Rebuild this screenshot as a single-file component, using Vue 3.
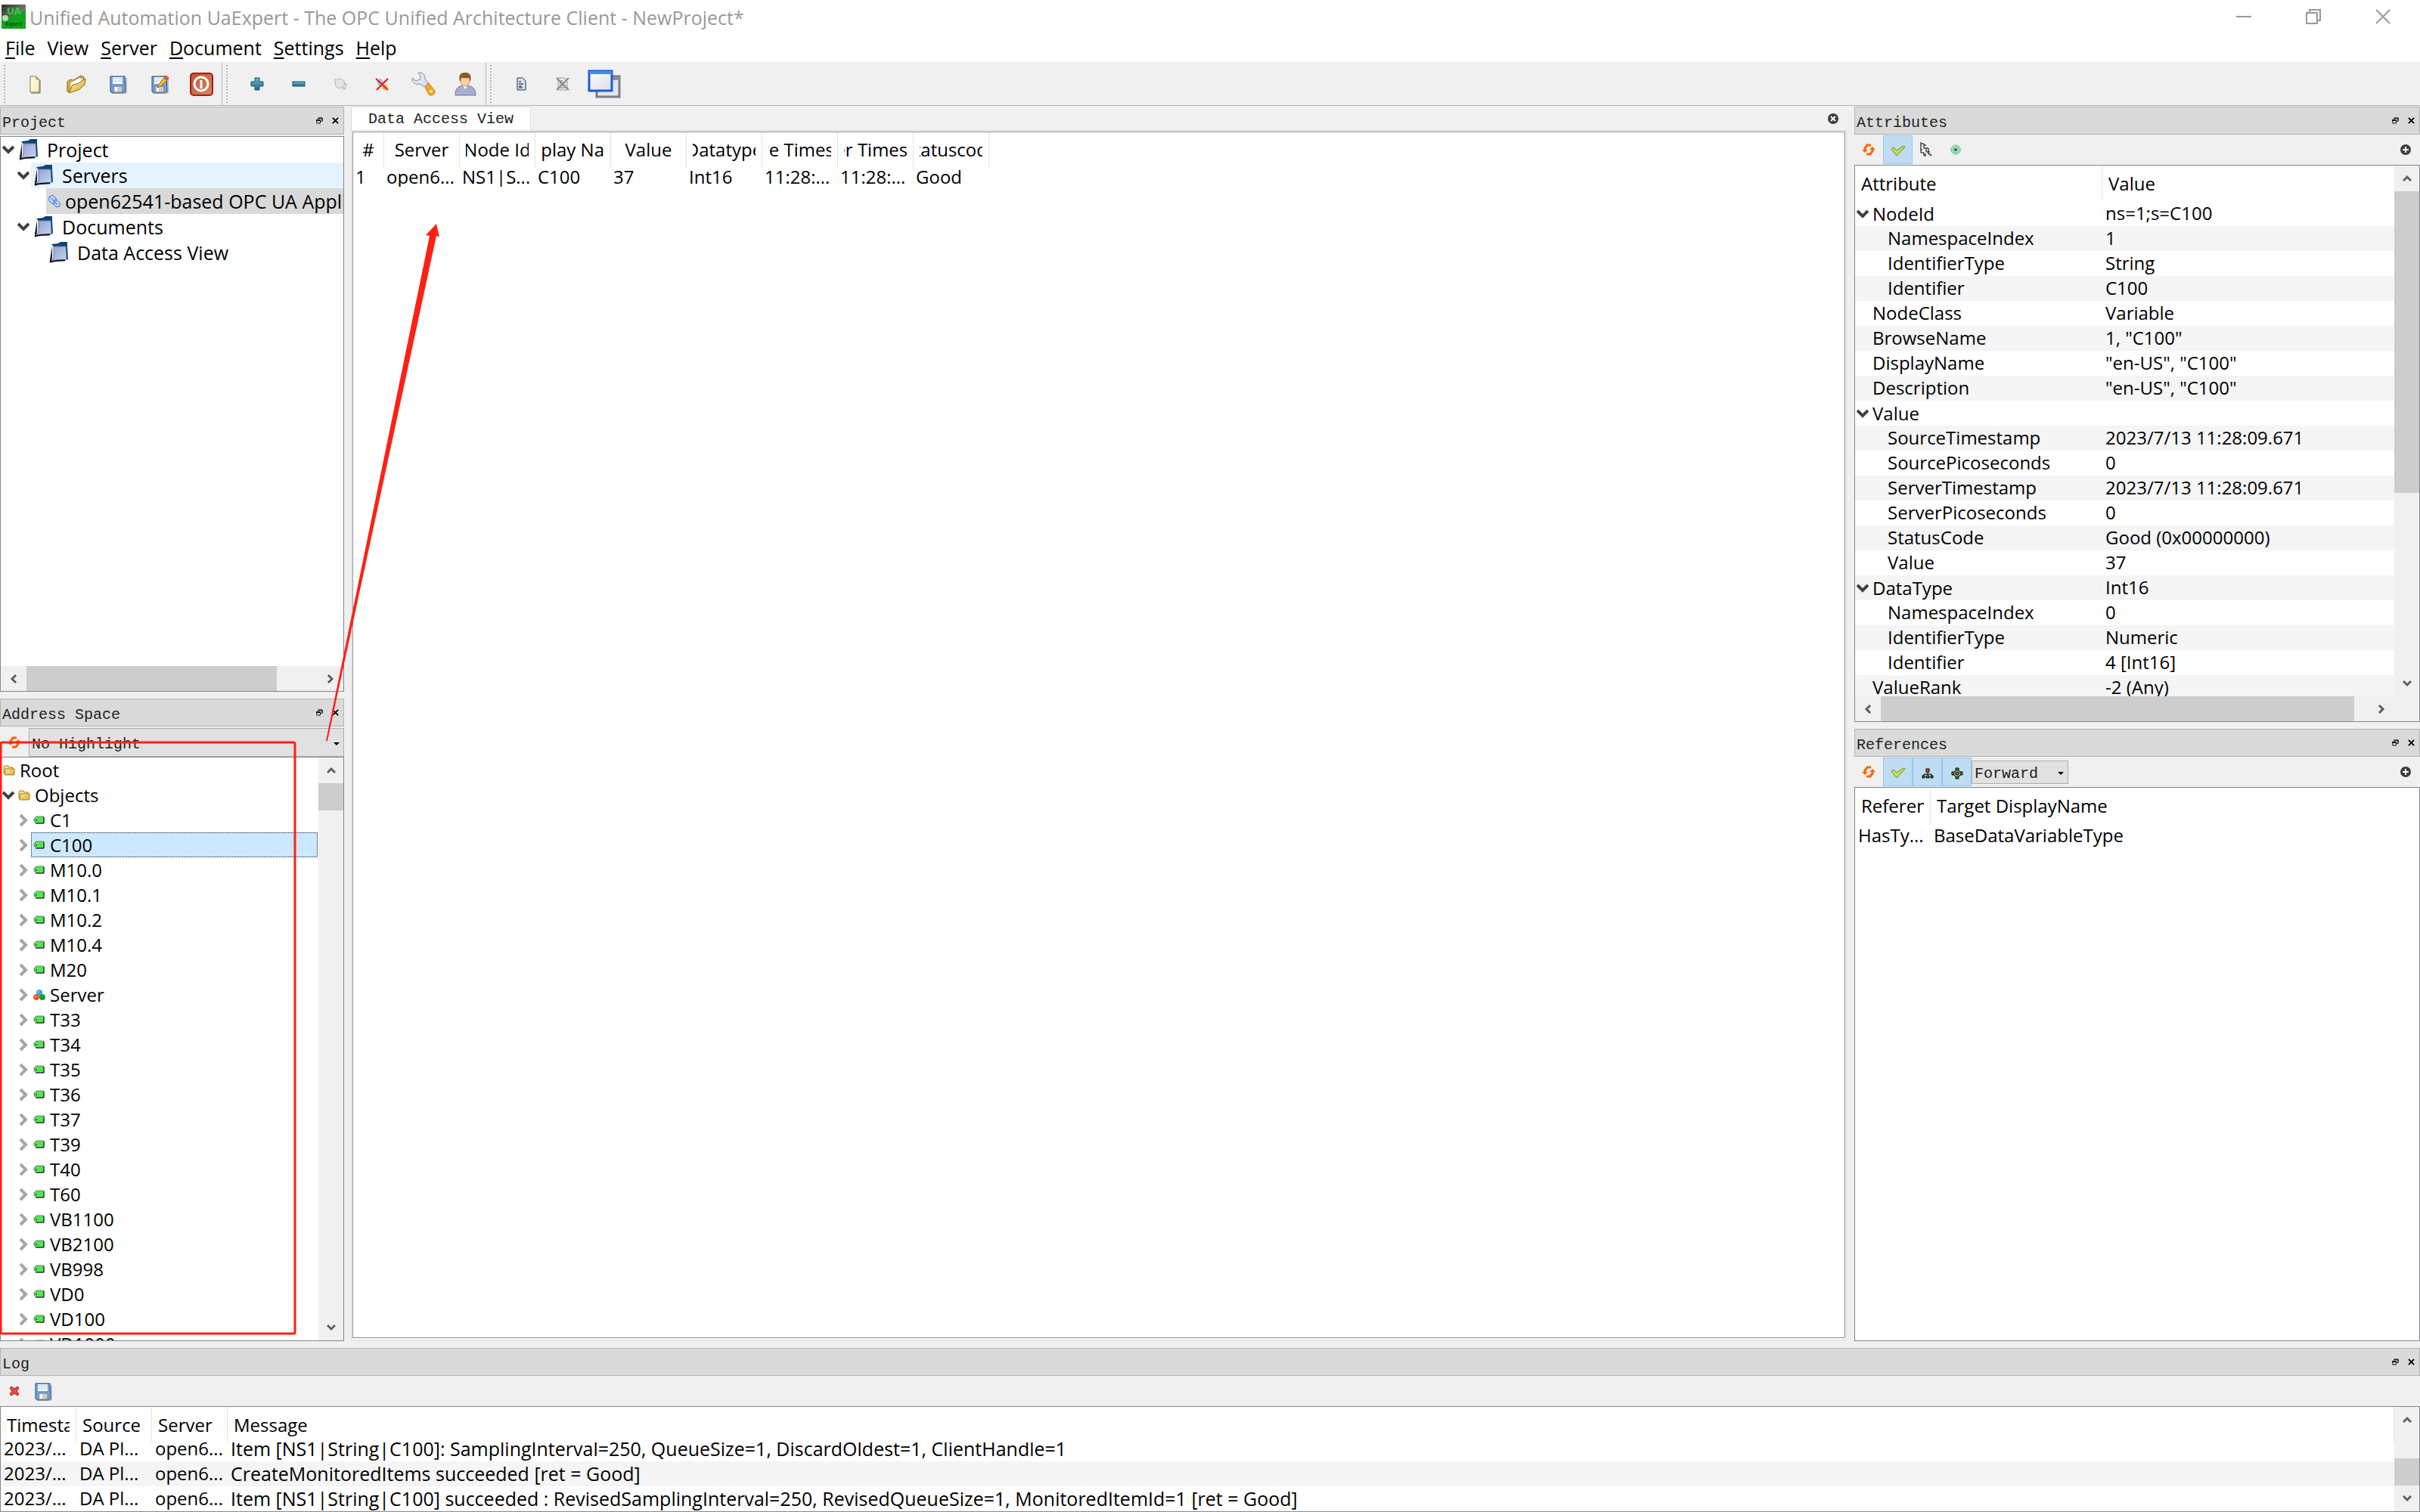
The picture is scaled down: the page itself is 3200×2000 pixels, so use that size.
<script setup>
import { ref } from 'vue'

const menus = [
  { key: 'F', rest: 'ile' },
  { key: '', rest: 'View' },
  { key: 'S', rest: 'erver' },
  { key: 'D', rest: 'ocument' },
  { key: 'S', rest: 'ettings' },
  { key: 'H', rest: 'elp' }
]

const toolGroups = [
  ['New', 'Open', 'Save', 'SaveAs', 'Power'],
  ['Plus', 'Minus', 'Plug', 'Unplug', 'Wrench', 'User'],
  ['Doc', 'DocOff', 'Windows']
]

const projectTree = [
  { label: 'Project', level: 0, open: true, icon: 'Book' },
  { label: 'Servers', level: 1, open: true, icon: 'Book', state: 'hover' },
  { label: 'open62541-based OPC UA Application', level: 2, icon: 'Link', state: 'muted' },
  { label: 'Documents', level: 1, open: true, icon: 'Book' },
  { label: 'Data Access View', level: 2, icon: 'Book' }
]

const objects = [
  'C1', 'C100', 'M10.0', 'M10.1', 'M10.2', 'M10.4', 'M20', 'Server', 'T33', 'T34', 'T35', 'T36',
  'T37', 'T39', 'T40', 'T60', 'VB1100', 'VB2100', 'VB998', 'VD0', 'VD100', 'VD1000'
]

const dataHeads = ['#', 'Server', 'Node Id', 'Display Name', 'Value', 'Datatype', 'Source Timestamp', 'Server Timestamp', 'Statuscode']
const dataRow = ['1', 'open6...', 'NS1|S...', 'C100', '37', 'Int16', '11:28:...', '11:28:...', 'Good']

const attributes = [
  ['NodeId', 'ns=1;s=C100', 'open'],
  ['NamespaceIndex', '1', 'child'],
  ['IdentifierType', 'String', 'child'],
  ['Identifier', 'C100', 'child'],
  ['NodeClass', 'Variable', ''],
  ['BrowseName', '1, "C100"', ''],
  ['DisplayName', '"en-US", "C100"', ''],
  ['Description', '"en-US", "C100"', ''],
  ['Value', '', 'open'],
  ['SourceTimestamp', '2023/7/13 11:28:09.671', 'child'],
  ['SourcePicoseconds', '0', 'child'],
  ['ServerTimestamp', '2023/7/13 11:28:09.671', 'child'],
  ['ServerPicoseconds', '0', 'child'],
  ['StatusCode', 'Good (0x00000000)', 'child'],
  ['Value', '37', 'child'],
  ['DataType', 'Int16', 'open'],
  ['NamespaceIndex', '0', 'child'],
  ['IdentifierType', 'Numeric', 'child'],
  ['Identifier', '4 [Int16]', 'child'],
  ['ValueRank', '-2 (Any)', '']
]

const logRows = [
  'Item [NS1|String|C100]: SamplingInterval=250, QueueSize=1, DiscardOldest=1, ClientHandle=1',
  'CreateMonitoredItems succeeded [ret = Good]',
  'Item [NS1|String|C100] succeeded : RevisedSamplingInterval=250, RevisedQueueSize=1, MonitoredItemId=1 [ret = Good]'
]

const selected = ref('C100')
const highlight = ref('No Highlight')
const direction = ref('Forward')
</script>

<template>
  <div class="app">
    <svg class="defs" aria-hidden="true">
      <defs>
        <linearGradient id="gGold" x1="0" y1="0" x2="1" y2="1">
          <stop offset="0" stop-color="#fff0a8" /><stop offset="1" stop-color="#dba92c" />
        </linearGradient>
        <linearGradient id="gPage" x1="0" y1="0" x2="1" y2="1">
          <stop offset="0" stop-color="#fffef2" /><stop offset="1" stop-color="#f8ecae" />
        </linearGradient>
        <linearGradient id="gBook" x1="0" y1="0" x2="1" y2="1">
          <stop offset="0" stop-color="#8f9fcb" /><stop offset="1" stop-color="#c9d6f6" />
        </linearGradient>
        <linearGradient id="gTeal" x1="0" y1="0" x2="0" y2="1">
          <stop offset="0" stop-color="#6fb4cc" /><stop offset="1" stop-color="#1b6a88" />
        </linearGradient>
        <linearGradient id="gWin" x1="0" y1="0" x2="1" y2="1">
          <stop offset="0" stop-color="#ffffff" /><stop offset="1" stop-color="#dcdde8" />
        </linearGradient>
        <linearGradient id="gPower" x1="0" y1="0" x2="1" y2="1">
          <stop offset="0" stop-color="#bf5532" /><stop offset="1" stop-color="#d28a66" />
        </linearGradient>
        <linearGradient id="gApp" x1="0" y1="0" x2="1" y2="1">
          <stop offset="0" stop-color="#333" /><stop offset="0.6" stop-color="#777" /><stop offset="1" stop-color="#444" />
        </linearGradient>
        <pattern id="dither" width="2" height="2" patternUnits="userSpaceOnUse">
          <rect width="2" height="2" fill="#21f421" /><path d="M0 0h1v1H0zM1 1h1v1H1z" fill="#7edc7e" />
        </pattern>
      </defs>
      <symbol id="New" viewBox="0 0 32 32">
        <path d="M10 6h8l4 4v17H10z" fill="url(#gPage)" stroke="#8a7a4a" /><path d="M18 6v4h4" fill="#d9d2b0" stroke="#8a7a4a" />
        <path d="M23 11v17H11" fill="none" stroke="#666" />
      </symbol>
      <symbol id="Open" viewBox="0 0 32 32">
        <path d="M4 26V13l4-3 4 1 10-6 4 2-2 8-17 12z" fill="#d7a93a" stroke="#8b6a1e" />
        <path d="M8 22V14l12-6 5 1-3 6z" fill="#fff" stroke="#b9a878" />
        <path d="M6 28l5-11 6-1 11-7-1 8-8 7z" fill="url(#gGold)" stroke="#8b6a1e" />
      </symbol>
      <symbol id="Save" viewBox="0 0 32 32">
        <path d="M6 6h19l1 20-3 2H8l-2-2z" fill="#6ea3de" stroke="#2f4a78" /><path d="M9 7h13v9H9z" fill="#f2f5f8" />
        <path d="M9 9h13M9 12h13" stroke="#c6ced8" /><path d="M10 19h12v8H10z" fill="#c9cdd2" stroke="#6f7a88" />
        <path d="M12 20h3v6h-3z" fill="#fff" /><path d="M27 8v20H9" fill="none" stroke="#888" />
      </symbol>
      <symbol id="SaveAs" viewBox="0 0 32 32">
        <use href="#Save" /><path d="M14 18l8-10 4 3-8 8-5 2z" fill="#f6bb2c" stroke="#96631a" /><path d="M22 7l2-2 4 3-2 3z" fill="#e8665c" stroke="#b23a30" />
      </symbol>
      <symbol id="Power" viewBox="0 0 32 32">
        <rect x="2" y="2" width="29" height="29" rx="4" fill="url(#gPower)" stroke="#a51f10" stroke-width="2" />
        <circle cx="16" cy="16" r="9" fill="none" stroke="#fff" stroke-width="3" /><path d="M16 11v11" stroke="#fff" stroke-width="3" />
      </symbol>
      <symbol id="Plus" viewBox="0 0 32 32"><path d="M13 8h6v5h5v6h-5v5h-6v-5H8v-6h5z" fill="url(#gTeal)" stroke="#1a556d" /></symbol>
      <symbol id="Minus" viewBox="0 0 32 32"><rect x="8" y="13" width="16" height="6" fill="url(#gTeal)" stroke="#1a556d" /></symbol>
      <symbol id="Plug" viewBox="0 0 32 32">
        <path d="M9 9l2 2 5-2 5 3 1 5-3 3-5 2-4-3-1-6zM19 20l4 3M20 15l4 1v3l-3 4h-3" fill="#e6e6e6" stroke="#b4b4b4" />
      </symbol>
      <symbol id="Unplug" viewBox="0 0 32 32">
        <path d="M10 10l5-1 4 5-5 6-4-4z" fill="#a9c0ef" /><path d="M17 17l4-1 3 5-4 4-4-3z" fill="#f4b54a" />
        <path d="M8 9l16 15M24 9L9 24" stroke="#f01818" stroke-width="2" />
      </symbol>
      <symbol id="Wrench" viewBox="0 0 32 32">
        <path d="M17 18l5-4 9 11c1 4-4 8-8 5z" fill="#f6a623" stroke="#c97a10" />
        <path d="M9 1c6-1 10 4 9 9l4 5-5 5-6-4C6 18 0 14 1 8l5 4 5-2 1-4z" fill="#dfe2ef" stroke="#8a8fa6" />
        <circle cx="26" cy="26" r="2" fill="#fff0c8" />
      </symbol>
      <symbol id="User" viewBox="0 0 32 32">
        <path d="M3 31c0-9 4-13 13-13s14 4 14 13z" fill="#a9aed0" stroke="#6f7499" />
        <path d="M12 17h8l-4 6z" fill="#fff" /><ellipse cx="16" cy="11" rx="6" ry="8" fill="#fbd09d" stroke="#c58a4e" />
        <path d="M9 13C7 4 10 1 16 1s9 3 7 12l-2-5c-5 1-8 0-10 0z" fill="#8b5a23" />
      </symbol>
      <symbol id="Doc" viewBox="0 0 32 32">
        <path d="M11 8h7l4 4v12H11z" fill="#cfe3fb" stroke="#333" /><path d="M13 13h3M13 16h6M13 19h4M13 21h5" stroke="#111" />
      </symbol>
      <symbol id="DocOff" viewBox="0 0 32 32">
        <path d="M10 8h8l4 4v12H10z" fill="#e9e9e9" stroke="#999" /><path d="M12 12h4M12 15h7M12 18h7M12 21h7" stroke="#777" />
        <path d="M8 8l16 16M24 8L8 24" stroke="#8a8a8a" stroke-width="2" />
      </symbol>
      <symbol id="Windows" viewBox="0 0 44 38">
        <rect x="12" y="9" width="30" height="27" fill="#e4e4ec" stroke="#7b7b8c" stroke-width="3" /><path d="M12 10h30v4H12z" fill="#8d8d9c" />
        <rect x="2" y="2" width="30" height="26" fill="url(#gWin)" stroke="#1a5fd0" stroke-width="3" /><path d="M2 2h30v4H2z" fill="#3d8df5" />
      </symbol>
      <symbol id="Book" viewBox="0 0 28 30">
        <path d="M4 4l9-1 3-2h9v5l1 18-4 1z" fill="#0f4372" /><path d="M2 28c3-1 3-5 3-11V6L2 24z" fill="#222" />
        <path d="M7 7h16l1 16c-1 3-3 3-5 3l-15 1c3-3 3-7 3-11z" fill="url(#gBook)" stroke="#6a7aa2" />
        <path d="M2 28c4-3 16-2 20-3" fill="none" stroke="#111" stroke-width="2" />
      </symbol>
      <symbol id="Link" viewBox="0 0 16 18">
        <path d="M1 3l4-2 5 4v6l-4 2-5-4zM7 8l4-1 4 4v5l-4 1-5-4z" fill="#bcd4f7" stroke="#4d7fd0" /><path d="M3 4l9 10" stroke="#4d7fd0" />
      </symbol>
      <symbol id="Folder" viewBox="0 0 16 14">
        <path d="M1 11V3l1-2h5l1 2h5v8z" fill="#f7e29a" stroke="#a67c1e" /><path d="M3 5h12v7l-1 1H2z" fill="url(#gGold)" stroke="#a67c1e" />
      </symbol>
      <symbol id="Tag" viewBox="0 0 16 12">
        <path d="M4 1h10v9H4L1 7V4z" fill="url(#dither)" stroke="#777" /><path d="M3 10h11V2" fill="none" stroke="#111" />
        <path d="M3 5h2v2H3z" fill="#555" />
      </symbol>
      <symbol id="Balls" viewBox="0 0 16 16">
        <circle cx="8" cy="5" r="4" fill="#35a7e8" /><circle cx="4" cy="11" r="4" fill="#ee5a24" /><circle cx="12" cy="11" r="4" fill="#17a02f" />
        <circle cx="7" cy="4" r="1" fill="#b9e4fb" /><circle cx="3" cy="10" r="1" fill="#fbb79d" />
      </symbol>
      <symbol id="Refresh" viewBox="0 0 18 16">
        <path d="M12 2H7L4 6v3M6 14h5l3-4V7" fill="none" stroke="#ff6200" stroke-width="3" />
        <path d="M0 8h8l-4 4zM18 8h-8l4-4z" fill="#ff6200" />
      </symbol>
      <symbol id="Check" viewBox="0 0 20 16"><path d="M1 5l3-2 4 4 9-6 2 1-11 12z" fill="#bfe04f" stroke="#6a8f2a" /></symbol>
      <symbol id="Steps" viewBox="0 0 18 20">
        <path d="M1 0v14h4M1 2h4v2h3M5 4v4h6v2M8 8v5h5M1 10h2M5 14v4h3M11 10v6h3v2h1M5 16h3" fill="none" stroke="#000" stroke-width="1" />
      </symbol>
      <symbol id="Target" viewBox="0 0 16 16">
        <circle cx="8" cy="8" r="6" fill="#f1fbf5" stroke="#3aa869" /><circle cx="8" cy="8" r="4" fill="#c9eed8" stroke="#3aa869" /><circle cx="8" cy="8" r="2" fill="#0d6a34" />
      </symbol>
      <symbol id="Hier" viewBox="0 0 16 16">
        <path d="M8 6v4M3 11v-2h10v2" fill="none" stroke="#000" />
        <rect x="6" y="2" width="4" height="4" fill="#e8521a" stroke="#000" />
        <path d="M1 11h3v3H1zM6 11h4v3H6zM12 11h3v3h-3z" fill="#1ea02c" stroke="#000" />
      </symbol>
      <symbol id="Net" viewBox="0 0 16 16">
        <path d="M8 2l6 6-6 6-6-6z" fill="#fff" stroke="#000" />
        <path d="M6 1h4v3H6zM6 12h4v3H6zM1 6h3v4H1zM12 6h3v4h-3z" fill="#1ea02c" stroke="#000" />
        <rect x="6" y="6" width="4" height="4" fill="#e8521a" stroke="#000" />
      </symbol>
      <symbol id="Add" viewBox="0 0 16 16"><circle cx="8" cy="8" r="7" fill="#3c3c3c" /><path d="M8 4v8M4 8h8" stroke="#fff" stroke-width="2" /></symbol>
      <symbol id="Shut" viewBox="0 0 16 16"><circle cx="8" cy="8" r="7" fill="#3c3c3c" /><path d="M5 5l6 6M11 5l-6 6" stroke="#fff" stroke-width="2" /></symbol>
      <symbol id="Clear" viewBox="0 0 16 16">
        <path d="M2 4l2-2 4 3 4-3 2 2-3 4 3 4-2 2-4-3-4 3-2-2 3-4z" fill="#ee4a4a" stroke="#a61414" />
      </symbol>
      <symbol id="Float" viewBox="0 0 10 10"><path d="M3 1h6v4M0 5h6M3 1v2M3 2h6M0 4h6M1 4v5h5V4M6 6h3V2" fill="none" stroke="#000" stroke-width="1" /></symbol>
      <symbol id="Close" viewBox="0 0 10 10"><path d="M1 1l8 8M9 1l-8 8" stroke="#000" stroke-width="2" /></symbol>
      <symbol id="Down" viewBox="0 0 16 12"><path d="M1 2l7 7 7-7" fill="none" stroke="#404040" stroke-width="4" /></symbol>
      <symbol id="Right" viewBox="0 0 12 18"><path d="M2 2l7 7-7 7" fill="none" stroke="#a6a6a6" stroke-width="4" /></symbol>
      <symbol id="ScUp" viewBox="0 0 12 12"><path d="M1 9l5-5 5 5" fill="none" stroke="#606060" stroke-width="3" /></symbol>
      <symbol id="ScDown" viewBox="0 0 12 12"><path d="M1 3l5 5 5-5" fill="none" stroke="#606060" stroke-width="3" /></symbol>
      <symbol id="ScLeft" viewBox="0 0 12 12"><path d="M9 1L4 6l5 5" fill="none" stroke="#606060" stroke-width="3" /></symbol>
      <symbol id="ScRight" viewBox="0 0 12 12"><path d="M3 1l5 5-5 5" fill="none" stroke="#606060" stroke-width="3" /></symbol>
    </svg>

    <header class="titlebar">
      <svg class="logo" viewBox="0 0 32 32" aria-hidden="true">
        <rect width="32" height="32" rx="1" fill="url(#gApp)" /><path d="M0 14c10 6 24 0 32-8v26H0z" fill="#0fa51a" />
        <circle cx="5" cy="18" r="4" fill="#b5dcb5" />
        <text x="7" y="13" class="logo-a">UA</text><text x="5" y="28" class="logo-b">Expert</text>
      </svg>
      <h1>Unified Automation UaExpert - The OPC Unified Architecture Client - NewProject*</h1>
      <div class="winbtns">
        <button aria-label="Minimize"><svg viewBox="0 0 20 20"><path d="M0 10h20" /></svg></button>
        <button aria-label="Restore"><svg viewBox="0 0 20 20"><path d="M1 5h14v14H1zM5 5V1h14v14h-4" /></svg></button>
        <button aria-label="Close"><svg viewBox="0 0 20 20"><path d="M1 1l18 18M19 1L1 19" /></svg></button>
      </div>
    </header>

    <nav class="menubar">
      <button v-for="m in menus" :key="m.rest"><u v-if="m.key">{{ m.key }}</u>{{ m.rest }}</button>
    </nav>

    <div class="toolbar">
      <div v-for="(g, i) in toolGroups" :key="i" class="group">
        <button v-for="t in g" :key="t" :aria-label="t"><svg :class="{ wide: t === 'Windows' }"><use :href="'#' + t" /></svg></button>
      </div>
    </div>

    <main class="work">
      <aside class="left">
        <section class="dock project">
          <div class="dock-title"><h2>Project</h2><button aria-label="Float"><svg><use href="#Float" /></svg></button><button aria-label="Close"><svg><use href="#Close" /></svg></button></div>
          <div class="box column">
            <ul class="tree tall">
              <li v-for="n in projectTree" :key="n.label" :class="'lv' + n.level">
                <span class="slot"><svg v-if="n.open" class="down"><use href="#Down" /></svg></span>
                <span class="node" :class="n.state">
                  <svg v-if="n.icon === 'Book'" class="book"><use href="#Book" /></svg>
                  <svg v-else class="link"><use href="#Link" /></svg>{{ n.label }}
                </span>
              </li>
            </ul>
            <div class="hbar">
              <button aria-label="Scroll left"><svg><use href="#ScLeft" /></svg></button>
              <div class="track"><div class="thumb project-thumb"></div></div>
              <button aria-label="Scroll right"><svg><use href="#ScRight" /></svg></button>
            </div>
          </div>
        </section>

        <section class="dock address">
          <div class="dock-title"><h2>Address Space</h2><button aria-label="Float"><svg><use href="#Float" /></svg></button><button aria-label="Close"><svg><use href="#Close" /></svg></button></div>
          <div class="filter">
            <button class="tool" aria-label="Refresh"><svg><use href="#Refresh" /></svg></button>
            <span class="combo">
              <select v-model="highlight" aria-label="Highlight"><option>No Highlight</option></select>
              <svg class="caret" viewBox="0 0 8 4"><path d="M0 0h8L4 4z" /></svg>
            </span>
          </div>
          <div class="box row">
            <ul class="tree">
              <li><span class="node"><svg class="folder"><use href="#Folder" /></svg>Root</span></li>
              <li><span class="slot"><svg class="down"><use href="#Down" /></svg></span><span class="node"><svg class="folder"><use href="#Folder" /></svg>Objects</span></li>
              <li v-for="o in objects" :key="o" class="lv1" @click="selected = o">
                <span class="slot"><svg class="right-chev"><use href="#Right" /></svg></span>
                <span class="node" :class="{ picked: o === selected }">
                  <svg v-if="o === 'Server'" class="folder"><use href="#Balls" /></svg>
                  <svg v-else class="tag"><use href="#Tag" /></svg>{{ o }}
                </span>
              </li>
            </ul>
            <div class="vbar">
              <button aria-label="Scroll up"><svg><use href="#ScUp" /></svg></button>
              <div class="track"><div class="thumb short-thumb"></div></div>
              <button aria-label="Scroll down"><svg><use href="#ScDown" /></svg></button>
            </div>
          </div>
        </section>
      </aside>

      <section class="center">
        <div class="tabs">
          <button class="tab">Data Access View</button>
          <button class="tab-close" aria-label="Close view"><svg><use href="#Shut" /></svg></button>
        </div>
        <div class="pane">
          <div class="box data">
            <table>
              <thead><tr><th v-for="h in dataHeads" :key="h"><span>{{ h }}</span></th></tr></thead>
              <tbody><tr><td v-for="(c, i) in dataRow" :key="i">{{ c }}</td></tr></tbody>
            </table>
          </div>
        </div>
      </section>

      <aside class="right">
        <section class="dock attrs">
          <div class="dock-title"><h2>Attributes</h2><button aria-label="Float"><svg><use href="#Float" /></svg></button><button aria-label="Close"><svg><use href="#Close" /></svg></button></div>
          <div class="strip">
            <button class="tool" aria-label="Refresh"><svg><use href="#Refresh" /></svg></button>
            <button class="tool on" aria-label="Auto update"><svg class="tick"><use href="#Check" /></svg></button>
            <button class="tool" aria-label="Expand"><svg class="steps"><use href="#Steps" /></svg></button>
            <button class="tool" aria-label="Monitor"><svg class="small"><use href="#Target" /></svg></button>
            <button class="tool add" aria-label="More"><svg class="small"><use href="#Add" /></svg></button>
          </div>
          <div class="box column">
            <div class="row grow">
              <table class="attr-table">
                <thead><tr><th>Attribute</th><th>Value</th></tr></thead>
                <tbody>
                  <tr v-for="(a, i) in attributes" :key="i">
                    <td :class="a[2]"><svg v-if="a[2] === 'open'" class="down"><use href="#Down" /></svg>{{ a[0] }}</td><td>{{ a[1] }}</td>
                  </tr>
                </tbody>
              </table>
              <div class="vbar">
                <button aria-label="Scroll up"><svg><use href="#ScUp" /></svg></button>
                <div class="track"><div class="thumb attr-vthumb"></div></div>
                <button aria-label="Scroll down"><svg><use href="#ScDown" /></svg></button>
              </div>
            </div>
            <div class="hbar attr-hbar">
              <button aria-label="Scroll left"><svg><use href="#ScLeft" /></svg></button>
              <div class="track"><div class="thumb attr-hthumb"></div></div>
              <button aria-label="Scroll right"><svg><use href="#ScRight" /></svg></button>
            </div>
          </div>
        </section>

        <section class="dock refs">
          <div class="dock-title"><h2>References</h2><button aria-label="Float"><svg><use href="#Float" /></svg></button><button aria-label="Close"><svg><use href="#Close" /></svg></button></div>
          <div class="strip">
            <button class="tool" aria-label="Refresh"><svg><use href="#Refresh" /></svg></button>
            <button class="tool on" aria-label="Auto update"><svg class="tick"><use href="#Check" /></svg></button>
            <button class="tool on" aria-label="Hierarchical"><svg class="small"><use href="#Hier" /></svg></button>
            <button class="tool on" aria-label="Non-hierarchical"><svg class="small"><use href="#Net" /></svg></button>
            <span class="combo forward">
              <select v-model="direction" aria-label="Direction"><option>Forward</option></select>
              <svg class="caret" viewBox="0 0 8 4"><path d="M0 0h8L4 4z" /></svg>
            </span>
            <button class="tool add" aria-label="More"><svg class="small"><use href="#Add" /></svg></button>
          </div>
          <div class="box column">
            <table class="ref-table">
              <thead><tr><th><span>Reference</span></th><th>Target DisplayName</th></tr></thead>
              <tbody><tr><td>HasTy...</td><td>BaseDataVariableType</td></tr></tbody>
            </table>
          </div>
        </section>
      </aside>
    </main>

    <section class="dock log">
      <div class="dock-title"><h2>Log</h2><button aria-label="Float"><svg><use href="#Float" /></svg></button><button aria-label="Close"><svg><use href="#Close" /></svg></button></div>
      <div class="strip">
        <button class="tool" aria-label="Clear log"><svg class="small"><use href="#Clear" /></svg></button>
        <button class="tool" aria-label="Save log"><svg class="disk"><use href="#Save" /></svg></button>
      </div>
      <div class="box row">
        <table class="log-table">
          <thead><tr><th><span>Timestamp</span></th><th>Source</th><th>Server</th><th>Message</th></tr></thead>
          <tbody><tr v-for="m in logRows" :key="m"><td>2023/...</td><td>DA Pl...</td><td>open6...</td><td>{{ m }}</td></tr></tbody>
        </table>
        <div class="vbar">
          <button aria-label="Scroll up"><svg><use href="#ScUp" /></svg></button>
          <div class="track"><div class="thumb short-thumb log-thumb"></div></div>
          <button aria-label="Scroll down"><svg><use href="#ScDown" /></svg></button>
        </div>
      </div>
    </section>

    <svg class="markup" aria-hidden="true">
      <rect x="1" y="982" width="389" height="782" rx="2" fill="none" stroke="#ff2015" stroke-width="3" />
      <path d="M431 980L568 312l-5-1 14-15 4 17-4-1L433 980z" fill="#ff2015" />
    </svg>
  </div>
</template>

<style>
body {
  margin: 0;
}
</style>

<style scoped>
.app {
  position: relative;
  display: flex;
  flex-direction: column;
  height: 100vh;
  overflow: hidden;
  background: #f0f0f0;
  color: #000;
  font: 24px/32px "Open Sans", "Noto Sans", sans-serif;
}
.app *, .app *::before {
  box-sizing: border-box;
}
.defs {
  position: absolute;
  width: 0;
  height: 0;
}
button {
  display: flex;
  align-items: center;
  justify-content: center;
  margin: 0;
  padding: 0;
  border: 0;
  background: none;
  color: inherit;
  font: inherit;
}
svg {
  display: block;
  flex: none;
}
h1, h2, ul {
  margin: 0;
  padding: 0;
  font: inherit;
}
.titlebar, .menubar, .tall {
  font-size: 25px;
}
.titlebar {
  display: flex;
  align-items: center;
  flex: none;
  height: 44px;
  padding: 0 3px 0 2px;
  background: #fff;
  color: #999;
}
.logo {
  width: 32px;
  height: 32px;
}
.logo-a {
  font: bold 13px "Open Sans", sans-serif;
  fill: #19e31f;
}
.logo-b {
  font: italic 8px "Open Sans", sans-serif;
  fill: #001a00;
}
h1 {
  flex: 1;
  padding: 2px 0 0 5px;
  white-space: nowrap;
}
.winbtns {
  display: flex;
}
.winbtns button {
  width: 92px;
  height: 42px;
}
.winbtns svg {
  width: 20px;
  height: 20px;
  fill: none;
  stroke: #999;
  stroke-width: 2px;
}
.menubar {
  display: flex;
  flex: none;
  gap: 16px;
  height: 39px;
  padding: 3px 7px 3px;
  border-bottom: 1px solid #f0f0f0;
  background: #fff;
}
.menubar button {
  display: block;
}
u {
  text-decoration-thickness: 2px;
  text-underline-offset: 3px;
}
.toolbar {
  display: flex;
  flex: none;
  height: 57px;
  border-bottom: 1px solid #b4b4b4;
}
.group {
  position: relative;
  display: flex;
  padding-left: 18px;
  border-right: 1px solid #b4b4b4;
}
.group:last-child {
  border-right: 0;
}
.group::before {
  content: "";
  position: absolute;
  left: 5px;
  top: 3px;
  height: 50px;
  border-left: 2px dotted #b8b8b8;
}
.group button {
  width: 55px;
}
.group svg {
  width: 32px;
  height: 32px;
}
.group svg.wide {
  width: 44px;
  height: 38px;
}
.work {
  display: flex;
  flex: 1;
  min-height: 0;
  padding-top: 1px;
}
.left, .right {
  display: flex;
  flex-direction: column;
  flex: none;
  gap: 9px;
}
.left {
  width: 455px;
}
.right {
  width: 748px;
  margin-left: 10px;
}
.dock {
  display: flex;
  flex-direction: column;
  min-height: 0;
}
.project {
  flex: 774 1 0;
}
.address {
  flex: 850 1 0;
}
.attrs {
  flex: 814 1 0;
}
.refs {
  flex: 810 1 0;
}
.dock-title {
  display: flex;
  align-items: center;
  flex: none;
  height: 37px;
  padding: 0 0 0 2px;
  border: 1px solid #b4b4b4;
  background: #dadada;
}
h2, select, .tab {
  color: #222;
  font: 20px/24px "Liberation Mono", monospace;
}
h2 {
  flex: 1;
  padding-top: 6px;
}
.dock-title button {
  width: 21px;
  height: 24px;
}
.dock-title svg {
  width: 9px;
  height: 9px;
}
.box {
  display: flex;
  flex: 1;
  min-height: 0;
  border: 1px solid #828790;
  background: #fff;
}
.column {
  flex-direction: column;
}
.row {
  display: flex;
  flex-direction: row;
}
.grow {
  flex: 1;
  min-height: 0;
}
.project .box {
  margin-top: 2px;
}
.tree {
  flex: 1;
  min-width: 0;
  overflow: hidden;
  list-style: none;
  white-space: nowrap;
}
.tree li {
  display: flex;
  height: 33px;
}
.tall li {
  height: 34px;
}
.lv1 {
  padding-left: 20px;
}
.lv2 {
  padding-left: 40px;
}
.slot {
  display: flex;
  flex: none;
  align-items: center;
  justify-content: center;
  width: 20px;
}
.down {
  width: 16px;
  height: 12px;
}
.right-chev {
  width: 12px;
  height: 18px;
}
.node {
  display: flex;
  flex: 1;
  align-items: center;
  padding-left: 3px;
}
.node svg {
  margin-right: 6px;
}
.node .book {
  width: 28px;
  height: 30px;
  margin-right: 10px;
}
.node .link {
  width: 16px;
  height: 18px;
}
.folder {
  width: 16px;
  height: 16px;
}
.tag {
  width: 16px;
  height: 12px;
}
.hover {
  background: #e5f3ff;
}
.muted {
  background: #d9d9d9;
}
.picked {
  flex: 0 1 379px;
  padding-left: 2px;
  border: 1px dotted #123;
  background: #cce8ff;
}
.hbar, .vbar {
  display: flex;
  flex: none;
  background: #f0f0f0;
}
.hbar {
  height: 33px;
}
.hbar button {
  width: 34px;
}
.vbar {
  flex-direction: column;
  width: 33px;
}
.vbar button {
  height: 34px;
}
.hbar svg, .vbar svg {
  width: 12px;
  height: 12px;
}
.track {
  display: flex;
  flex: 1;
  min-height: 0;
}
.vbar .track {
  flex-direction: column;
}
.thumb {
  background: #cdcdcd;
}
.project-thumb {
  width: 86%;
}
.short-thumb {
  height: 36px;
}
.attr-vthumb {
  height: 63%;
}
.attr-hthumb {
  width: 97%;
}
.attr-hbar {
  padding-right: 33px;
}
.filter {
  display: flex;
  flex: none;
  height: 40px;
  padding: 2px 0 0;
}
.tool {
  flex: none;
  width: 38px;
  height: 38px;
}
.tool svg {
  width: 18px;
  height: 16px;
}
.tool .tick {
  width: 20px;
}
.tool .steps {
  width: 18px;
  height: 20px;
}
.tool .small {
  width: 16px;
  height: 16px;
}
.tool .disk {
  width: 32px;
  height: 32px;
}
.on {
  width: 39px;
  padding-top: 3px;
  border: 1px solid #90c8f6;
  background: #c0dcf3;
}
.add {
  margin-left: auto;
}
.combo {
  position: relative;
  display: flex;
  flex: 1;
}
.forward {
  flex: none;
  width: 128px;
  height: 31px;
}
select {
  width: 100%;
  margin: 0;
  padding: 5px 0 0 3px;
  border: 1px solid #adadad;
  border-radius: 0;
  background: #e1e1e1;
  appearance: none;
}
.caret {
  position: absolute;
  right: 6px;
  top: 50%;
  width: 8px;
  height: 4px;
}
.strip {
  display: flex;
  flex: none;
  align-items: center;
  height: 40px;
}
.center {
  display: flex;
  flex: 1;
  flex-direction: column;
  min-width: 0;
  margin-left: 9px;
}
.tabs {
  display: flex;
  align-items: center;
  justify-content: space-between;
  flex: none;
  height: 31px;
  padding-right: 10px;
}
.tab {
  height: 31px;
  padding: 2px 22px 0;
  border: 1px solid #d9d9d9;
  border-bottom: 0;
  background: #fff;
}
.tab-close svg {
  width: 16px;
  height: 16px;
}
.pane {
  display: flex;
  flex: 1;
  min-height: 0;
  margin-bottom: 1px;
  padding: 1px 1px 2px;
  border: 1px solid #d9d9d9;
  background: #fff;
}
thead, tbody {
  display: block;
}
table {
  display: flex;
  flex: 1;
  flex-direction: column;
  min-width: 0;
  min-height: 0;
  overflow: hidden;
  white-space: nowrap;
}
thead {
  flex: none;
}
tr {
  display: flex;
}
th, td {
  flex: none;
  height: 33px;
  padding: 0 4px;
  overflow: hidden;
  font-weight: normal;
  text-align: left;
}
th {
  height: 47px;
  padding: 8px 8px 0;
  border-right: 1px solid #e5e5e5;
}
th span {
  display: block;
  overflow: hidden;
}
.data th, .data td {
  width: 100px;
}
.data th:first-child, .data td:first-child {
  width: 41px;
}
.data th {
  display: flex;
  padding: 7px 8px 0;
}
.data th span {
  display: flex;
  flex: 1;
  justify-content: center;
}
.data td {
  height: 25px;
  padding-left: 3px;
  line-height: 24px;
}
.attr-table th:first-child, .attr-table td:first-child {
  width: 327px;
}
.attr-table th:last-child, .attr-table td:last-child,
.ref-table th:last-child, .log-table th:last-child, .log-table td:last-child {
  flex: 1;
}
.attr-table tr:nth-child(even), .log-table tr:nth-child(even) {
  background: #f5f5f5;
}
.attr-table td:first-child {
  padding-left: 23px;
}
.attr-table td.child {
  padding-left: 43px;
}
.attr-table td.open {
  display: flex;
  align-items: center;
  gap: 5px;
  padding-left: 2px;
}
.ref-table th:first-child, .ref-table td:first-child {
  width: 100px;
}
.ref-table th:last-child, .attr-table th:last-child {
  border-right: 0;
}
.log {
  flex: none;
  height: 217px;
  margin-top: 9px;
}
.log-table th, .log-table td {
  width: 100px;
}
.log-table td:last-child {
  font-size: 25px;
}
.log-table tbody {
  display: flex;
  flex: 1;
  flex-direction: column;
  justify-content: flex-end;
  min-height: 0;
  overflow: hidden;
}
.log-thumb {
  margin-top: 34px;
}
.markup {
  position: absolute;
  left: 0;
  top: 0;
  width: 100%;
  height: 100%;
  pointer-events: none;
}
</style>
